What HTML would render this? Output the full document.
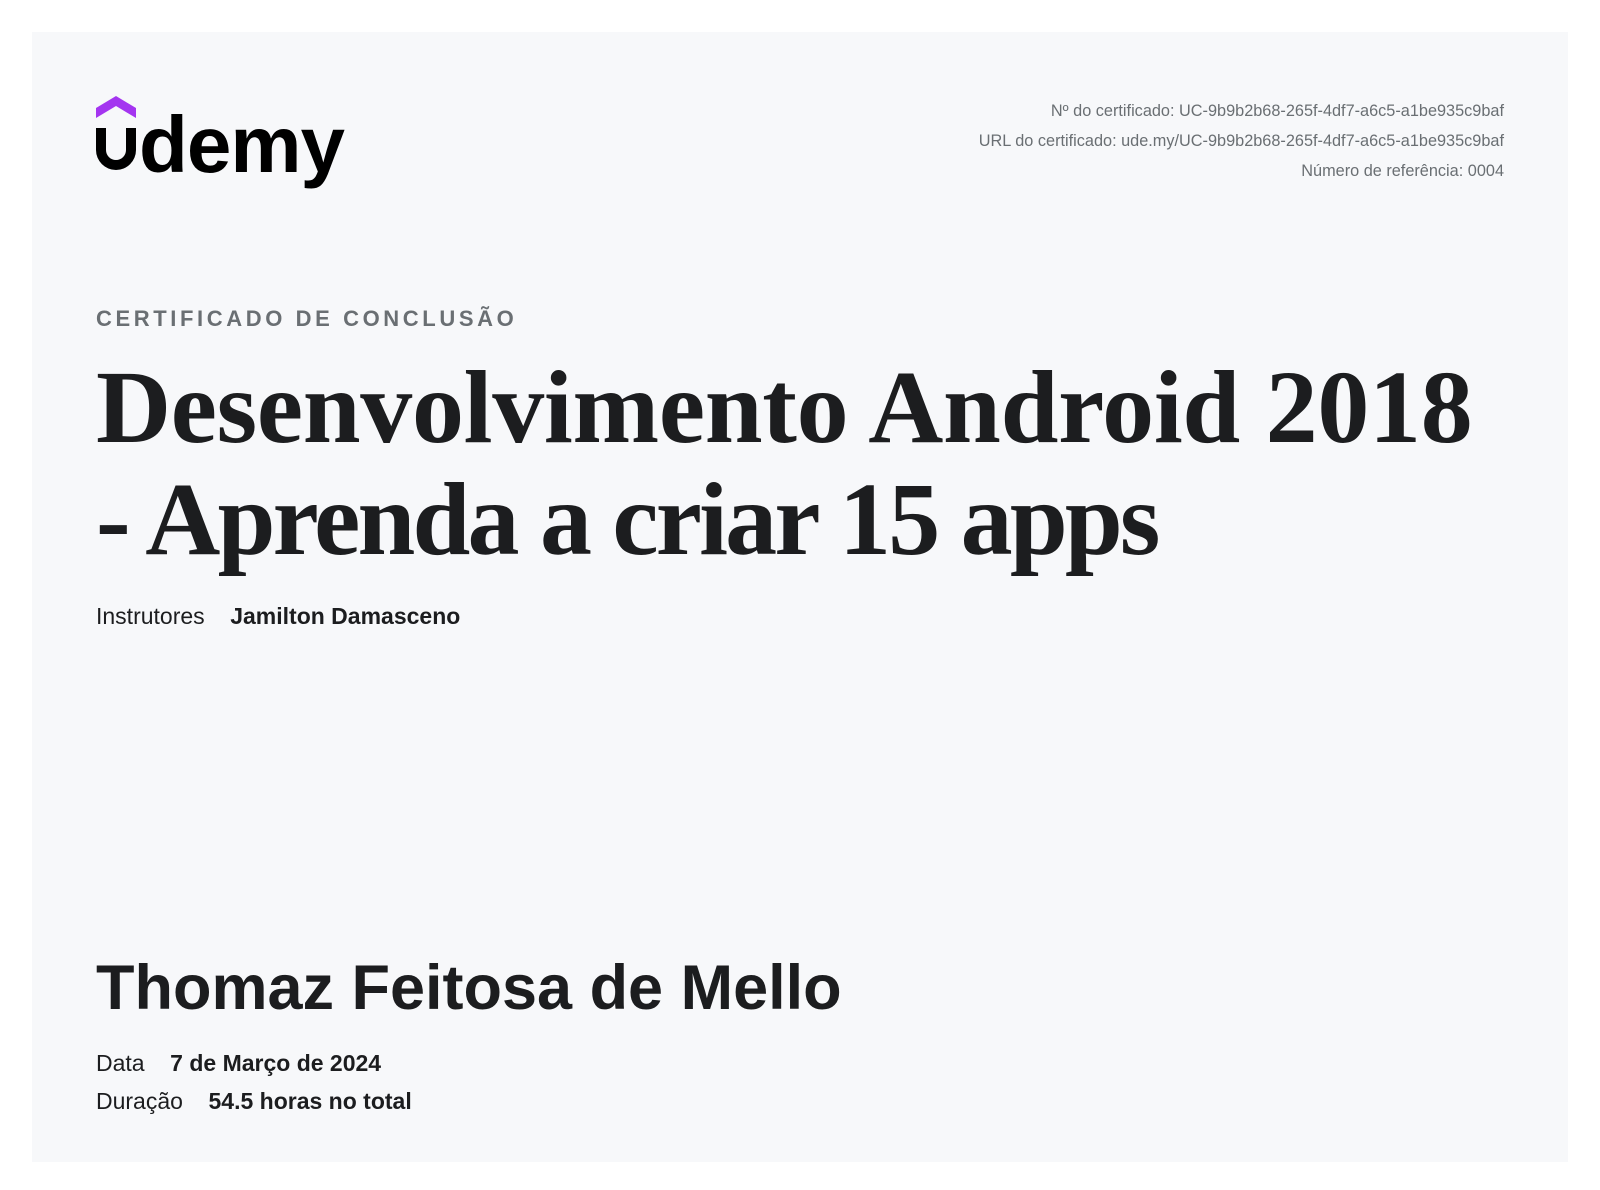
<!DOCTYPE html>
<html><head><meta charset="utf-8"><style>
html,body{margin:0;padding:0;background:#fff;}
body{width:1600px;height:1190px;position:relative;overflow:hidden;font-family:"Liberation Sans",sans-serif;color:#1c1d1f;}
.card{position:absolute;left:32px;top:32px;width:1536px;height:1130px;background:#f7f8fa;}
.meta{position:absolute;right:96px;top:96px;text-align:right;font-size:16.3px;color:#6a6f73;line-height:30px;}
.cert{position:absolute;left:96px;top:306px;font-size:22px;font-weight:bold;letter-spacing:3.6px;color:#6a6f73;}
.title{position:absolute;left:96px;top:352px;font-family:"Liberation Serif",serif;font-weight:bold;font-size:104px;line-height:112px;white-space:nowrap;}
.ins{position:absolute;left:96px;top:603px;font-size:23px;}
.name{position:absolute;left:96px;top:952px;font-size:63px;font-weight:bold;white-space:nowrap;}
.row{position:absolute;left:96px;font-size:23px;}
b{font-weight:bold;}
</style></head><body>
<div class="card"></div>
<svg style="position:absolute;left:96px;top:96px" width="270" height="100" viewBox="0 0 270 100">
<path d="M0 12 L20 0 L40 12 L40 22 L20 10 L0 22 Z" fill="#a435f0"/>
<path d="M0 32 h10 v22 a10 10 0 0 0 20 0 v-22 h10 v22 a20 20 0 0 1 -40 0 Z" fill="#000"/>
<text x="43" y="76" font-family="Liberation Sans,sans-serif" font-weight="bold" font-size="80" letter-spacing="-1" fill="#000">demy</text>
</svg>
<div class="meta">Nº do certificado: UC-9b9b2b68-265f-4df7-a6c5-a1be935c9baf<br>URL do certificado: ude.my/UC-9b9b2b68-265f-4df7-a6c5-a1be935c9baf<br>Número de referência: 0004</div>
<div class="cert">CERTIFICADO DE CONCLUSÃO</div>
<div class="title"><span style="letter-spacing:-0.3px">Desenvolvimento Android 2018</span><br><span style="letter-spacing:-2.8px">- Aprenda a criar 15 apps</span></div>
<div class="ins">Instrutores &nbsp;&nbsp;&nbsp;<b>Jamilton Damasceno</b></div>
<div class="name">Thomaz Feitosa de Mello</div>
<div class="row" style="top:1050px">Data &nbsp;&nbsp;&nbsp;<b>7 de Março de 2024</b></div>
<div class="row" style="top:1088px">Duração &nbsp;&nbsp;&nbsp;<b>54.5 horas no total</b></div>
</body></html>
